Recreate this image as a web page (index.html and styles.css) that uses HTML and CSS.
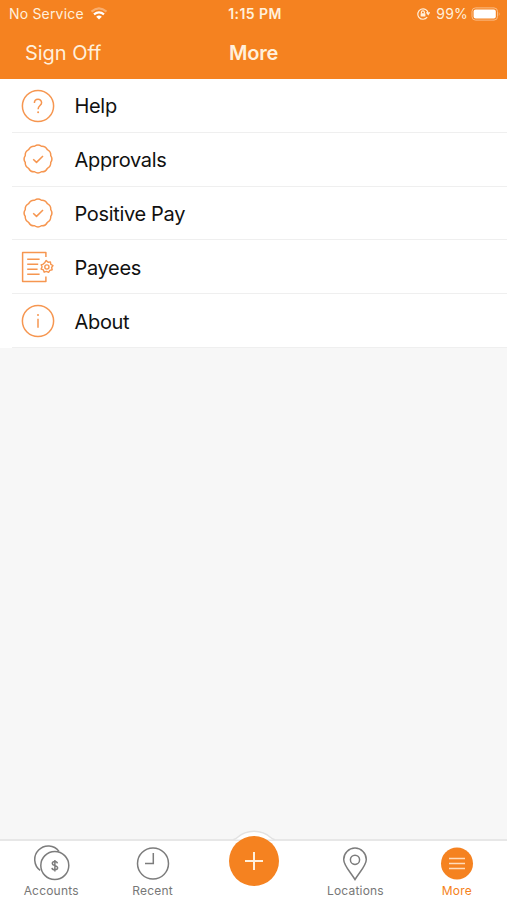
FILE: index.html
```html
<!DOCTYPE html>
<html lang="en">
<head>
<meta charset="utf-8">
<title>More</title>
<link rel="stylesheet" href="styles.css">
</head>
<body>
<svg class="defs" width="0" height="0" aria-hidden="true">
  <symbol id="approved" viewBox="-17 -17 34 34">
    <path d="M-3.42-12.75A6 6 0 0 1 3.42-12.75A6 6 0 0 1 9.33-9.33A6 6 0 0 1 12.75-3.42A6 6 0 0 1 12.75 3.42A6 6 0 0 1 9.33 9.33A6 6 0 0 1 3.42 12.75A6 6 0 0 1-3.42 12.75A6 6 0 0 1-9.33 9.33A6 6 0 0 1-12.75 3.42A6 6 0 0 1-12.75-3.42A6 6 0 0 1-9.33-9.33A6 6 0 0 1-3.42-12.75Z"/>
    <path d="M-4.8.2L-1.5 3.4L5-3"/>
  </symbol>
</svg>
<div class="app">
  <header class="header">
    <div class="status">
      <div class="status-left">
        <span class="carrier">No Service</span>
        <svg class="wifi" width="18" height="14" viewBox="0 0 18 14">
          <path class="faint" d="M1.5 4.6Q9-2 16.5 4.6"/>
          <path d="M4 7.4Q9 3.2 14 7.4"/>
          <path class="solid" d="M6.2 9.7Q9 7.5 11.8 9.7L9 12.5Z"/>
        </svg>
      </div>
      <span class="clock">1:15 PM</span>
      <div class="status-right">
        <svg class="lock" width="14" height="14" viewBox="0 0 14 14">
          <path d="M11.2 10.2A5.2 5.2 0 1 1 12.2 6.4M10.4 5.4L12.2 7.4L13.6 5.2"/>
          <path d="M5.4 6.5V5.4a1.5 1.5 0 0 1 3 0V6.5"/>
          <rect x="4.6" y="6.2" width="4.8" height="3.4" rx=".5"/>
        </svg>
        <span class="percent">99%</span>
        <svg width="30" height="14" viewBox="0 0 30 14">
          <rect class="shell" x="1" y=".9" width="25.5" height="12.2" rx="3.5"/>
          <rect class="charge" x="2.6" y="2.4" width="22.2" height="9.2" rx="2"/>
          <path class="cap" d="M27.8 4.8Q29.4 7 27.8 9.2Z"/>
        </svg>
      </div>
    </div>
    <div class="nav">
      <span class="signoff">Sign Off</span>
      <h1 class="title">More</h1>
    </div>
  </header>
  <ul class="menu">
    <li class="row">
      <svg class="icon" viewBox="-17 -17 34 34"><circle r="15.6"/><path d="M-3.6-3.1C-3.6-8 3.6-8 3.6-3.3C3.6-.5.1-.3.1 3.2"/><circle class="dot" cx=".1" cy="6.2" r="1"/></svg>
      <span class="label">Help</span>
    </li>
    <li class="row">
      <svg class="icon"><use href="#approved"/></svg>
      <span class="label">Approvals</span>
    </li>
    <li class="row">
      <svg class="icon"><use href="#approved"/></svg>
      <span class="label">Positive Pay</span>
    </li>
    <li class="row">
      <svg class="icon" viewBox="-17 -17 34 34">
        <path d="M7.9-10V-14.6H-15.4V14.6H7.9V9.5M-10.8-7.8H1.6M-10.8-2.8H.2M-10.8 2.2H-.4M-10.8 7.2H1.6"/>
        <path class="gear" d="M6.9-4.6L8.2-6.5L10.1-4.8L12.4-5.1L12.8-2.7L15-1.5L13.6 .5L14.2 2.8L11.8 3.4L10.6 5.4L8.5 4.4L6.2 5.2L5.4 2.9L3.1 2L4.1-.2L3.1-2.2L5.3-2.9Z"/>
        <circle class="gear" cx="8.9" cy="0" r="2.1"/>
      </svg>
      <span class="label">Payees</span>
    </li>
    <li class="row">
      <svg class="icon" viewBox="-17 -17 34 34"><circle r="15.6"/><path d="M0-2.3V6.8"/><circle class="dot" cy="-6" r="1"/></svg>
      <span class="label">About</span>
    </li>
  </ul>
  <nav class="tabs">
    <div class="tab">
      <svg class="tab-icon" viewBox="0 0 38 38">
        <path d="M27 6.4A13.5 13.5 0 1 0 8.2 25.4"/><circle cx="22.8" cy="20.5" r="14"/>
        <path d="M25.4 18.4C25.1 15.9 20.4 15.8 20.3 18.5C20.3 21.3 25.6 19.9 25.6 22.8C25.6 25.5 20.3 25.5 20 22.8M22.9 15V26.5"/>
      </svg>
      <span class="tab-label">Accounts</span>
    </div>
    <div class="tab">
      <svg class="tab-icon" viewBox="0 0 38 38"><circle cx="19" cy="18.5" r="15.5"/><path d="M19.3 8V18.4H11"/></svg>
      <span class="tab-label">Recent</span>
    </div>
    <div class="tab">
      <svg class="add" width="60" height="60" viewBox="0 0 60 60">
        <path class="halo" d="M9.4 9.5Q11.5 9.2 13 7.7A26 26 0 0 1 47 7.7Q48.5 9.2 50.6 9.5"/>
        <circle class="disc" cx="30" cy="31" r="25"/><path class="plus" d="M21 31H39M30 22V40"/>
      </svg>
    </div>
    <div class="tab">
      <svg class="tab-icon" viewBox="0 0 38 38"><path d="M19 34.5C14 26.5 7.7 20.3 7.7 14.4A11.3 11.3 0 0 1 30.3 14.4C30.3 20.3 24 26.5 19 34.5Z"/><circle cx="19" cy="14.8" r="4.6"/></svg>
      <span class="tab-label">Locations</span>
    </div>
    <div class="tab active">
      <svg class="tab-icon" viewBox="0 0 38 38"><circle class="disc" cx="19" cy="18.5" r="16"/><path class="bars" d="M11 13.5H27M11 18.5H27M11 23.5H27"/></svg>
      <span class="tab-label">More</span>
    </div>
  </nav>
</div>
</body>
</html>
```
FILE: styles.css
```css
* { box-sizing: border-box; }
body { margin: 0; font-family: Inter, "Liberation Sans", sans-serif; }
.defs { position: absolute; }
.app { height: 900px; display: flex; flex-direction: column; background: #f7f7f7; overflow: hidden; }
.header { height: 79px; background: #f58220; color: #fff0dc; }
.status { height: 28px; padding: 0 6px 0 9px; display: grid; grid-template-columns: 1fr auto 1fr; align-items: center; font-size: 14px; line-height: 28px; }
.status-left, .status-right { display: flex; align-items: center; }
.status-left { gap: 6px; }
.status-right { justify-content: flex-end; gap: 3px; }
.status-right .lock { margin-right: 3px; }
.carrier { letter-spacing: .18px; }
.clock { font-weight: 600; letter-spacing: .45px; }
.percent { letter-spacing: .2px; }
.wifi { fill: none; stroke: #fff; stroke-width: 2.2; }
.wifi .faint { stroke: #f9ad6d; }
.wifi .solid { fill: #fff; stroke: none; }
.lock { fill: none; stroke: #fff0dc; stroke-width: 1.2; }
.lock rect { fill: #fff0dc; stroke: none; }
.shell { fill: none; stroke: #fabd87; stroke-width: 1; }
.charge { fill: #fff; }
.cap { fill: #fabd87; }
.nav { height: 49px; display: grid; grid-template-columns: 1fr auto 1fr; align-items: center; padding: 0 25px; }
.signoff { font-size: 20px; letter-spacing: -.05px; }
.title { margin: 0; font-size: 20px; font-weight: 600; letter-spacing: -.2px; }
.menu { margin: 0; padding: 0; list-style: none; background: #fff; }
.row { height: 53.8px; margin-left: 12px; padding-left: 9px; display: flex; align-items: center; border-bottom: 1px solid #efefef; }
.icon { width: 34px; height: 34px; margin-right: 19.5px; fill: none; stroke: #f69650; stroke-width: 1.5; stroke-linejoin: round; }
.row:first-child .icon { margin-top: 1px; }
.dot { fill: #f69650; stroke: none; }
.gear { stroke-width: 1.4; }
.label { padding-top: 2px; font-size: 20px; letter-spacing: -.33px; color: #111; line-height: 24px; }
.tabs { height: 61px; margin-top: auto; display: grid; grid-template-columns: repeat(5, 1fr); background: #fff; border-top: 2px solid #e7e7e7; }
.tab { display: flex; flex-direction: column; align-items: center; padding: 4px 0 0 1px; color: #777; }
.tab-icon { width: 38px; height: 38px; fill: none; stroke: #7c7c7c; stroke-width: 1.5; }
.tab-label { padding-top: 1px; font-size: 12px; line-height: 14px; letter-spacing: .2px; }
.active { color: #f58220; }
.disc { fill: #f58220; stroke: none; }
.bars { stroke: #ffdcbb; stroke-width: 1.6; }
.add { margin-top: -15px; flex: none; }
.halo { fill: #fff; stroke: #e2e2e2; stroke-width: 1.5; }
.plus { stroke: #fff0dc; stroke-width: 2; }
```
